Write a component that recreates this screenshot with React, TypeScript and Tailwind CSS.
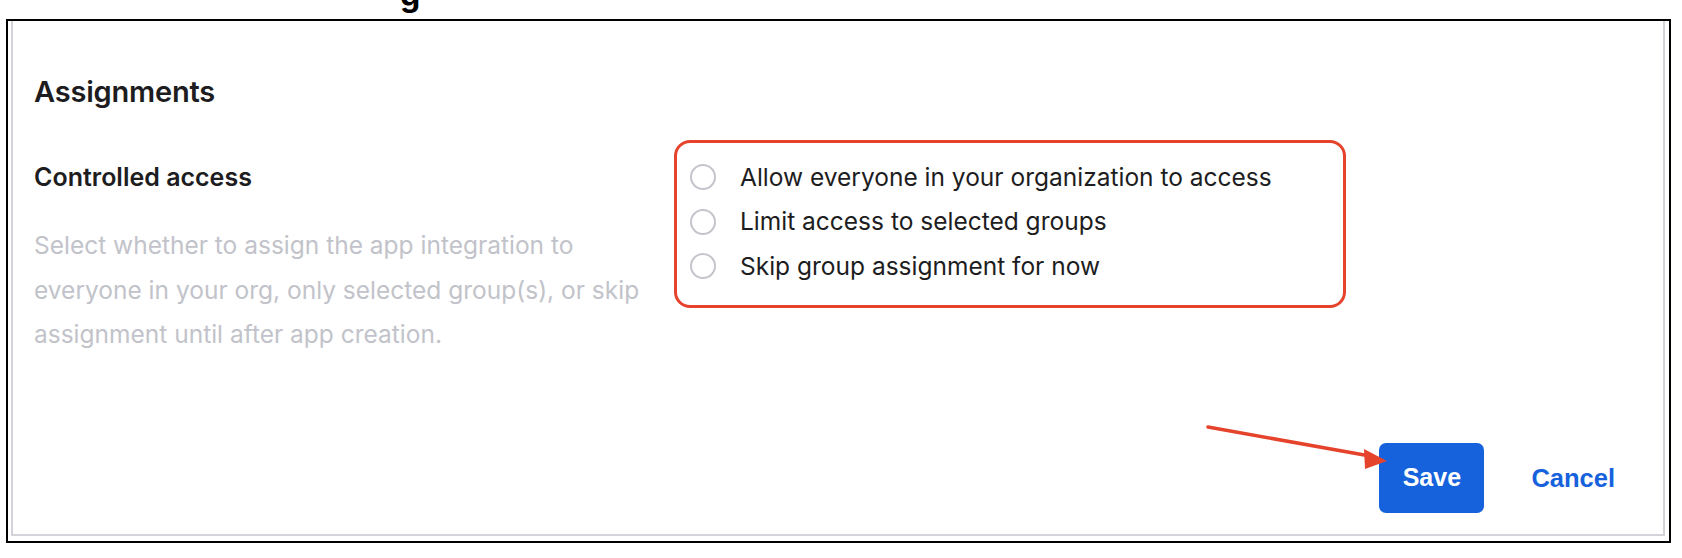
export default function App() {
  const options = [
    'Allow everyone in your organization to access',
    'Limit access to selected groups',
    'Skip group assignment for now',
  ];

  return (
    <div className="relative w-[1682px] h-[558px] bg-white overflow-hidden font-['Inter',sans-serif]">
      {/* tail of the heading above, cut off by the crop */}
      <div className="h-[19px] overflow-hidden pl-[400px]">
        <div className="-mt-[24px] text-[32px] leading-[38px] font-bold text-black">g</div>
      </div>

      <div className="ml-[6px] w-[1665px] h-[524px] border-2 border-black flex">
        <div className="flex-1 ml-[3px] mr-[4px] mb-[5px] border-x-2 border-b-2 border-[#d3d4da] flex flex-col pl-[21px] pr-[48px]">
          <h2 className="pt-[55px] text-[29px] leading-[32px] font-semibold text-[#1d1d21] tracking-[-0.2px]">
            Assignments
          </h2>

          <div className="flex mt-[32px]">
            <div className="w-[640px] pt-[15px]">
              <h3 className="text-[25px] leading-[44px] font-semibold text-[#1d1d21]">Controlled access</h3>
              <p className="mt-[24px] text-[24.5px] leading-[44.5px] text-[#c2c3ca] w-[620px]">
                Select whether to assign the app integration to everyone in your org, only selected
                group(s), or skip assignment until after app creation.
              </p>
            </div>

            <div className="h-[168px] w-[672px] border-[3px] border-[#e5432c] rounded-[16px] pl-[13px] pt-[12px]">
              {options.map((o) => (
                <label key={o} className="flex items-center gap-[24px] h-[44.5px]">
                  <span className="w-[26px] h-[26px] rounded-full border-2 border-[#c4c5cc] bg-white" />
                  <span className="text-[24.5px] text-[#1d1d21]">{o}</span>
                </label>
              ))}
            </div>
          </div>

          <div className="mt-auto mb-[21px] flex justify-end items-center gap-[47px]">
            <button className="w-[105px] h-[70px] rounded-[7px] bg-[#1662dd] text-white text-[25px] font-bold font-['Liberation_Sans',sans-serif]">
              Save
            </button>
            <button className="text-[#1662dd] text-[25.5px] font-bold font-['Liberation_Sans',sans-serif]">
              Cancel
            </button>
          </div>
        </div>
      </div>

      {/* annotation arrow */}
      <svg className="absolute left-[1200px] top-[418px]" width="200" height="60" viewBox="0 0 200 60">
        <line x1="8" y1="9" x2="170" y2="38" stroke="#e5432c" strokeWidth="3.5" strokeLinecap="round" />
        <polygon points="164,31 187,43 165,51" fill="#e5432c" />
      </svg>
    </div>
  );
}
